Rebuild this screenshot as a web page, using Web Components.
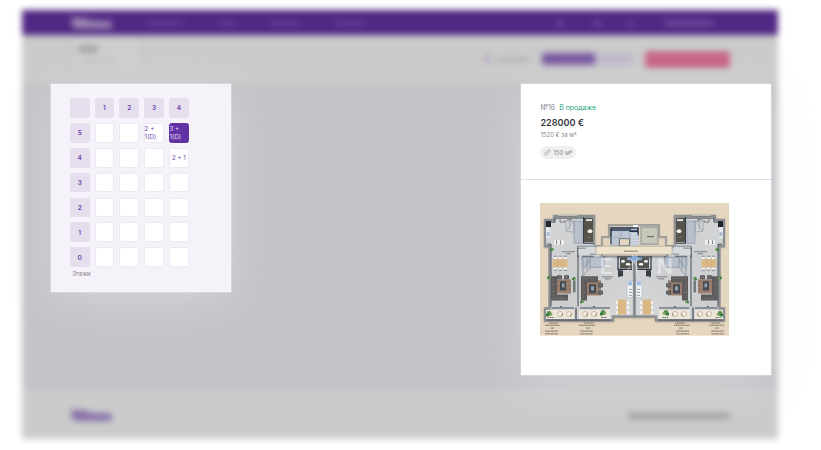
<!DOCTYPE html>
<html lang="ru">
<head>
<meta charset="utf-8">
<title>Шахматка</title>
<style>
html,body{margin:0;height:100%;overflow:hidden;background:#fff;font-family:Inter,"Noto Sans",sans-serif}
</style>
</head>
<body>
<app-screen>
  <site-backdrop slot="backdrop"></site-backdrop>
  <floor-board slot="left"></floor-board>
  <unit-card slot="right" number="№16" status="В продаже" price="228000 €" rate="1520 € за м²" area="150 м²"><floor-plan></floor-plan></unit-card>
</app-screen>
<script>
const define=(name,html,setup)=>customElements.define(name,class extends HTMLElement{
  constructor(){super();const t=document.createElement('template');t.innerHTML=html;
    this.attachShadow({mode:'open'}).append(t.content.cloneNode(true));}
  connectedCallback(){if(setup)setup(this,this.shadowRoot);}
});

define('app-screen',`<style>
:host{display:block;position:relative;width:821px;height:450px;overflow:hidden}
slot[name=left],slot[name=right]{display:block;position:absolute}
slot[name=left]{left:51px;top:84px}
slot[name=right]{left:521px;top:84px}
</style><slot name="backdrop"></slot><slot name="left"></slot><slot name="right"></slot>`);

define('site-backdrop',`<style>
:host{display:block;box-sizing:border-box;padding:9.5px 43px 11.5px 22px;height:450px}
.page{display:grid;grid-template-rows:25px 49px 305px 50px;background:#cbcbcb;filter:blur(3.2px)}
header,.tools,footer{display:flex;align-items:center;padding:0 48px}
header{background:#502783;padding-top:2px}
footer{padding-top:4px}
header i,.tools i,footer i{display:block;border-radius:2px;flex:none}
.logo{width:42px;height:11px;background:#9a86b2;clip-path:polygon(0 0,35% 0,45% 25%,100% 35%,100% 100%,8% 100%)}
footer .logo{background:#8770aa}
.nav{height:4px;background:#66419a}
.box{box-sizing:border-box;width:74px;height:39px;border:2px solid #c2bfc9;align-self:start;padding:9px 7px;margin-left:-1px;background:#cecece}
.box i{width:20px;height:6px;background:#9c9c9c}.box i+i{width:29px;height:3px;margin:7px 0 0 6px;background:#bcbcbc}
.gap{flex:1}
main{background:#c5c2c8}
</style><div class="page">
<header><i class="logo"></i><i class="nav" style="width:40px;margin-left:33px"></i><i class="nav" style="width:20px;margin-left:32px"></i><i class="nav" style="width:31px;margin-left:32px"></i><i class="nav" style="width:33px;margin-left:34px"></i><span class="gap"></span><i class="nav" style="width:8px;height:7px"></i><i class="nav" style="width:9px;height:7px;margin-left:29px"></i><i class="nav" style="width:10px;height:5px;margin-left:23px"></i><i class="nav" style="width:50px;margin:0 16px 0 29px;background:#7b58a3"></i></header>
<div class="tools"><div class="box"><i></i><i></i></div><span class="gap"></span><i style="width:6px;height:8px;background:#b2a5c3"></i><i style="width:35px;height:5px;margin-left:5px;background:#b6b6b7"></i><i style="width:53px;height:12px;margin-left:12px;background:#7656a0"></i><i style="width:38px;height:12px;background:#bfb9ca"></i><i style="width:85px;height:15px;margin-left:12px;background:linear-gradient(#c3456f 0 30%,#cb7793 30% 65%,#c3456f 65%)"></i></div>
<main></main>
<footer><i class="logo"></i><span class="gap"></span><i style="width:102px;height:6px;background:#9d9e9e"></i></footer></div>`);

define('floor-board',`<style>
:host{display:block;box-sizing:border-box;width:180px;height:208px;padding:14px 0 0 18.8px;background:#f5f2fa;box-shadow:0 0 0 .5px #e2e1e4,0 8px 40px rgba(232,232,236,.45);color:#6f44ab}
.grid{display:grid;grid-template-columns:repeat(5,19.8px);grid-auto-rows:19.8px;gap:5.1px 5px}
.c{box-sizing:border-box;border:1px solid #ede9f4;border-radius:2.5px;background:#fff;display:flex;align-items:center;justify-content:center;font-size:6.25px;line-height:8px;padding-top:.8px}
.h{background:#e4deed;border-color:#e4deed;font-weight:600;font-size:6.5px}
.wrap{justify-content:flex-start;padding-left:0;margin-left:0}
.wrap span{margin-left:-.6px}
.on{background:#6231a3;border-color:#6231a3;color:#e9e1f4}
.cap{margin:2.6px 0 0 2.4px;font-size:5.8px;line-height:8px;color:#85818c}
</style><div class="grid"></div><div class="cap">Этажи</div>`,(el,root)=>{
  const grid=root.querySelector('.grid');
  const add=(text,cls='')=>{const d=document.createElement('div');d.className='c '+cls;d.innerHTML='<span>'+text+'</span>';grid.append(d);};
  ['','1','2','3','4'].forEach(t=>add(t,'h'));
  for(let f=5;f>=0;f--){
    add(f,'h');
    for(let n=1;n<=4;n++){
      if(f===5&&n===3)add('2 +<br>1(D)','wrap');
      else if(f===5&&n===4)add('3 +<br>1(D)','wrap on');
      else if(f===4&&n===4)add('2 + 1');
      else add('');
    }
  }
});

define('unit-card',`<style>
:host{display:block;box-sizing:border-box;width:250px;height:291px;background:#fff;box-shadow:0 0 0 .5px #dedede,0 8px 40px rgba(232,232,232,.45);color:#858892}
.info{box-sizing:border-box;height:96px;border-bottom:1px solid #e0dee8;padding:19px 19.4px 0}
.line{display:flex;gap:4.2px;font-size:6.95px;line-height:10px}
.status{color:#26a57b}
.price{margin-top:2.8px;font-size:9.1px;line-height:13px;font-weight:600;color:#343841}
.rate{margin-top:1.2px;font-size:6px;line-height:9px}
.tag{display:flex;align-items:center;gap:2px;box-sizing:border-box;width:35.6px;height:13px;margin-top:7.2px;padding-left:4px;border-radius:7px;background:#f0f0f0;font-size:6.1px;line-height:9px;white-space:nowrap}
.tag svg{flex:none}
.area{padding-top:.6px}
.plan{padding:23px 19.2px}
</style><div class="info"><div class="line"><span class="num"></span><span class="status"></span></div><div class="price"></div><div class="rate"></div>
<div class="tag"><svg width="7" height="7" viewBox="0 0 14 14" fill="none" stroke="#858892" stroke-width="1.3" stroke-linejoin="round"><path d="M1 10 10 1 13 4 4 13ZM4 7l1.5 1.5M6 5l1.5 1.5M8 3l1.5 1.5"/></svg><span class="area"></span></div></div>
<div class="plan"><slot></slot></div>`,(el,root)=>{
  for(const [c,a] of [['num','number'],['status','status'],['price','price'],['rate','rate'],['area','area']])root.querySelector('.'+c).textContent=el.getAttribute(a);
});

define('floor-plan',`<style>:host{display:block;width:189px;height:132px}svg{display:block}</style>
<svg width="189" height="132.6" viewBox="0 0 189 132" preserveAspectRatio="none">
<defs>
<filter id="sh" x="-5%" y="-5%" width="110%" height="110%"><feGaussianBlur stdDeviation="1"/></filter>
<linearGradient id="tile" x2="1" y2="1"><stop stop-color="#d3d5d6"/><stop offset=".5" stop-color="#cbcdcf"/><stop offset="1" stop-color="#d6d7d8"/></linearGradient>
<g id="sofa"><path d="M0 0H17V6H6V24H0Z" fill="#5c5a5b"/><path d="M1.5 2H16M2 3V23M6 1V5M11 1V5M1 9H5M1 16H5" stroke="#7b7673" stroke-width=".6"/></g>
<g id="chair"><rect width="5" height="4" rx="1" fill="#505256"/><rect x="1" y="1" width="3" height="2" fill="#74767a"/></g>
<g id="round"><circle r="2.6" fill="#f1eadd" stroke="#b7a485" stroke-width=".6"/><path d="M1 2.2A2.6 2.6 0 0 0 2.6-.4" fill="none" stroke="#75685b" stroke-width=".8"/></g>
<g id="plant"><circle r="1.5" fill="#568b4c"/><circle cx="-1" cy="1" r="1" fill="#2f7e3b"/><circle cx="1.2" cy=".5" r=".9" fill="#78a65e"/></g>
<g id="half">
<path d="M4 16H13V12H54V43H62V53H94.5V114H73V118H4V104H9V44H4Z" fill="#8c8172" opacity=".5" filter="url(#sh)" transform="translate(.8 .8)"/>
<path d="M5 17H14V13H54V43H62V54H94.5V113H73V117H5V105H9.5V43H5Z" fill="url(#tile)" stroke="#8c8f92" stroke-width="2.4"/>
<path d="M6.7 19H15V15H52M7 41H11V103M38 43V103M11.5 104.5H34M40 104.5H70M42 53H54M64 53H92M38 54V45M6.5 116.5H71" fill="none" stroke="#3a4450" stroke-width=".9"/>
<path d="M18 13H37" stroke="#ebe9e2" stroke-width="1.2"/><path d="M18 13.5H37M20 16v3h5v-2M27 17l4-1v3" fill="none" stroke="#4d4641" stroke-width=".6"/>
<rect x="6" y="18" width="5" height="6" fill="#232528"/><rect x="6" y="24" width="4" height="11" fill="#e5e9ee"/><rect x="6.6" y="29" width="3" height="4" fill="#a9bbcd"/>
<rect x="14" y="37" width="10" height="4.5" fill="#eef0f2"/><path d="M16 38h1M20 38h1M16 40h1M20 40h1" stroke="#222" stroke-width="1"/>
<rect x="44" y="15" width="9" height="24" fill="#56544a"/><path d="M43.5 14V40H53" fill="none" stroke="#333d49" stroke-width="1.1"/><rect x="46" y="16" width="6" height="2" fill="#dde1e5"/><ellipse cx="50" cy="28" rx="2.4" ry="1.9" fill="#f1f2f3"/><path d="M47 34h4" stroke="#77756b"/>
<rect x="34" y="18" width="8" height="22" fill="#b8c0cd" stroke="#8a94a2" stroke-width=".6"/><path d="M26 18H34V30M26 18V28M29.5 18V26M26 28l8-10M26 28l8 1" fill="none" stroke="#8b95a4" stroke-width=".6"/>
<rect x="38" y="42" width="17" height="10" fill="#d6d8d9"/><path d="M38 52V43H55M38 45h8M50 51H56" fill="none" stroke="#6b7682" stroke-width=".8"/>
<rect x="41" y="54" width="23" height="10" fill="#b9c1cd"/><path d="M41 54H64V64H50L43 73V54M47 54V66M50 54V64M43 66l7-10" fill="none" stroke="#7f8b9c" stroke-width=".7"/>
<rect x="65" y="53" width="12" height="10" fill="#d0d3d7" opacity=".6"/>
<rect x="80" y="54" width="12" height="11" fill="#54544d"/><path d="M78 53V66H92M79 67V74" fill="none" stroke="#2f3844" stroke-width="1.2"/><ellipse cx="83" cy="58" rx="2" ry="1.5" fill="#eceef0"/><ellipse cx="88" cy="61" rx="2.4" ry="1.3" fill="#fff"/><rect x="87" y="54" width="5" height="3" fill="#7d9ac6"/>
<rect x="87" y="77" width="6" height="17" fill="#f1f3f5" stroke="#a9b0b9" stroke-width=".5"/><rect x="88" y="78" width="4" height="4" fill="#9fbfe0"/><path d="M89 86h3M89 89h3M89 92h3" stroke="#6d7988" stroke-width=".7"/><rect x="78" y="67" width="5" height="6" fill="#3a3d42"/>
<rect x="12.5" y="56" width="15" height="8" fill="#dbb987"/><path d="M17.5 56v8M22 56v8" stroke="#c29d6d" stroke-width=".4"/><path d="M14 54.5h3M19 54.5h3M24 54.5h3M14 65.5h3M19 65.5h3M24 65.5h3" stroke="#f6f3ec" stroke-width="2"/><path d="M14 53h3M19 53h3M24 53h3M14 67h3M19 67h3M24 67h3" stroke="#50575f" stroke-width=".6"/>
<rect x="78" y="96" width="8" height="15" fill="#d9b884"/><path d="M76 99h2M76 104h2M76 109h2M87 99h2M87 104h2M87 109h2" stroke="#f6f2ea" stroke-width="3"/>
<rect x="14" y="76" width="17" height="14" fill="#967b6b"/><path d="M14 80h17M14 84h17M14 88h17" stroke="#a98d7b" stroke-width=".5"/>
<g transform="translate(11 97) scale(1 -1)"><use href="#sofa"/></g><rect x="20" y="78" width="6" height="9" fill="#444b54"/><rect x="22" y="80" width="2.5" height="4" fill="#98a3ac"/><use href="#chair" x="17" y="72"/><use href="#chair" x="24" y="72"/>
<rect x="45" y="77" width="16" height="15" fill="#967b6b"/><path d="M45 81h16M45 86h16" stroke="#a98d7b" stroke-width=".5"/><use href="#sofa" x="41" y="73"/><rect x="49" y="81" width="7" height="9" fill="#444b54"/><rect x="51" y="83" width="3" height="4" fill="#98a3ac"/><use href="#chair" x="58" y="80"/><use href="#chair" x="58" y="87"/>
<rect x="6" y="106.5" width="28" height="9" fill="#ebe6d9"/><rect x="39" y="106.5" width="31" height="9" fill="#ebe6d9"/><path d="M36 104V118" stroke="#5d646c" stroke-width="1.5"/><path d="M20 103h2M53 103h2" stroke="#5d646c" stroke-width="1"/>
<use href="#round" x="20" y="110.5"/><use href="#round" x="29" y="110.5"/><use href="#round" x="45" y="110.5"/><use href="#round" x="54" y="110.5"/>
<g transform="translate(9 110) scale(1.6)"><use href="#plant"/></g><g transform="translate(63 109) scale(1.6)"><use href="#plant"/></g><use href="#plant" x="12" y="46"/><use href="#plant" x="9" y="74"/><use href="#plant" x="42" y="98"/><use href="#plant" x="34" y="75"/><rect x="33" y="77" width="2.5" height="12" fill="#6c7b73"/>
<path d="M22 48.5h13M26 50.5h5M62 73.5h11M65 75.5h6M8 114h6M61 114h6" stroke="#4b4d50" stroke-width=".7" stroke-dasharray="1.5 .3"/>
<path d="M9 119.5h9M5 121.7h15M10 124.5h4M5 127.5h13M5 130.3h13M44 119.5h10M39 121.7h16M46 124.5h4M40 127.5h13M40 130.3h13" stroke="#62574b" stroke-width=".8" stroke-dasharray="1.4 .4 2.1 .3"/>
</g></defs>
<rect width="189" height="132" fill="#e5d6bf"/>
<use href="#half"/><use href="#half" transform="translate(189 0) scale(-1 1)"/>
<path d="M62 44V34H69V22H119V34H126V44Z" fill="#e2d4bd" stroke="#a09f99" stroke-width="2.2"/>
<rect x="70" y="24" width="29" height="18" fill="#bdc6d3"/><path d="M71 41V25H98V32M71 27H89M90 25v3h8" fill="none" stroke="#27344a" stroke-width="1.5"/><path d="M71 34H79V42H71ZM81 27v7M90 30v12" fill="none" stroke="#94a0b1" stroke-width=".7"/><rect x="79.5" y="35.5" width="10" height="7" fill="#e5d6bf" stroke="#6d7886"/><path d="M91 31h7M91 34h7M91 37h7M91 40h7" stroke="#e9edf2" stroke-width=".8"/><rect x="93" y="22" width="5" height="2" fill="#fff"/>
<rect x="101" y="24" width="17" height="17" fill="#c7c8b8" stroke="#999c9b" stroke-width="1.2"/><path d="M107 33.5h7" stroke="#55564f" stroke-width=".9"/>
<rect x="56" y="43" width="76" height="8" fill="#eee3cb" stroke="#b2afa8" stroke-width=".7"/><path d="M84 48h14" stroke="#5e584c" stroke-width=".8" stroke-dasharray="2 .3"/>
<path d="M94.5 52V113" stroke="#7c858e" stroke-width="1.4"/><rect x="91.5" y="53" width="6" height="5" fill="#83a8da"/>
<g fill="#fff" fill-opacity=".45" font-family="Inter,sans-serif" font-size="22" font-weight="500"><text x="59.5" y="71">E</text><text x="116.5" y="71">N</text></g>
<path d="M88 55q13 6 8 15M99 55q-10 6-12 15" fill="none" stroke="#fff" stroke-opacity=".3" stroke-width="1.5"/>
</svg>`);
</script>
</body>
</html>
